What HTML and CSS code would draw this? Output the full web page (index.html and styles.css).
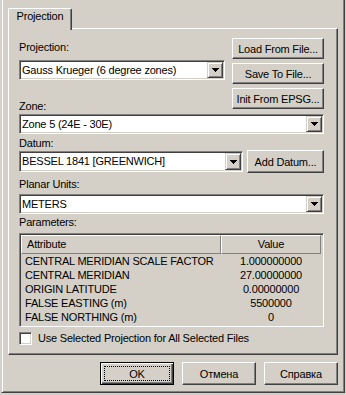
FILE: index.html
```html
<!DOCTYPE html>
<html lang="en">
  <head>
    <meta charset="UTF-8" />
    <meta name="viewport" content="width=device-width, initial-scale=1.0" />
    <title>Projection</title>
    <link rel="stylesheet" href="styles.css">
  </head>
  <body>
    <div class="window">
      <div class="tabs">
        <div class="tab">Projection</div>
      </div>
      <div class="panel">
        <div class="top">
          <div class="top-left">
            <div class="label first">Projection:</div>
            <div class="combo combo-proj">
              <span class="combo-text">Gauss Krueger (6 degree zones)</span>
              <span class="drop"><svg width="7" height="4"><rect x="0" y="0" width="7" height="1"/><rect x="1" y="1" width="5" height="1"/><rect x="2" y="2" width="3" height="1"/><rect x="3" y="3" width="1" height="1"/></svg></span>
            </div>
            <div class="label zone-label">Zone:</div>
          </div>
          <div class="top-right">
            <button class="btn side-btn">Load From File...</button>
            <button class="btn side-btn">Save To File...</button>
            <button class="btn side-btn">Init From EPSG...</button>
          </div>
        </div>
        <div class="combo combo-zone">
          <span class="combo-text">Zone 5 (24E - 30E)</span>
          <span class="drop"><svg width="7" height="4"><rect x="0" y="0" width="7" height="1"/><rect x="1" y="1" width="5" height="1"/><rect x="2" y="2" width="3" height="1"/><rect x="3" y="3" width="1" height="1"/></svg></span>
        </div>
        <div class="label datum-label">Datum:</div>
        <div class="datum-row">
          <div class="combo combo-datum">
            <span class="combo-text">BESSEL 1841 [GREENWICH]</span>
            <span class="drop"><svg width="7" height="4"><rect x="0" y="0" width="7" height="1"/><rect x="1" y="1" width="5" height="1"/><rect x="2" y="2" width="3" height="1"/><rect x="3" y="3" width="1" height="1"/></svg></span>
          </div>
          <button class="btn datum-btn">Add Datum...</button>
        </div>
        <div class="label units-label">Planar Units:</div>
        <div class="combo combo-units">
          <span class="combo-text">METERS</span>
          <span class="drop"><svg width="7" height="4"><rect x="0" y="0" width="7" height="1"/><rect x="1" y="1" width="5" height="1"/><rect x="2" y="2" width="3" height="1"/><rect x="3" y="3" width="1" height="1"/></svg></span>
        </div>
        <div class="label params-label">Parameters:</div>
        <div class="list">
          <div class="list-head">
            <div class="head-cell head-attr">Attribute</div>
            <div class="head-cell head-value">Value</div>
          </div>
          <div class="list-body">
            <div class="cell-attr">CENTRAL MERIDIAN SCALE FACTOR</div>
            <div class="cell-value">1.000000000</div>
            <div class="cell-attr">CENTRAL MERIDIAN</div>
            <div class="cell-value">27.00000000</div>
            <div class="cell-attr">ORIGIN LATITUDE</div>
            <div class="cell-value">0.00000000</div>
            <div class="cell-attr">FALSE EASTING (m)</div>
            <div class="cell-value">5500000</div>
            <div class="cell-attr">FALSE NORTHING (m)</div>
            <div class="cell-value">0</div>
          </div>
        </div>
        <div class="check-row">
          <span class="check"></span>
          <span>Use Selected Projection for All Selected Files</span>
        </div>
      </div>
      <div class="actions">
        <button class="btn action-btn default-btn"><span class="focus">OK</span></button>
        <button class="btn action-btn">Отмена</button>
        <button class="btn action-btn">Справка</button>
      </div>
    </div>
  </body>
</html>
```

FILE: styles.css
```css
* {
  box-sizing: border-box;
}
body {
  margin: 0;
  width: 346px;
  height: 395px;
  background-color: #d4d0c8;
  font-family: "Liberation Sans", Arial, sans-serif;
  font-size: 11px;
  letter-spacing: -0.2px;
  color: #000;
  overflow: hidden;
}
.window {
  margin-left: 1px;
  width: 344px;
  height: 393px;
  border-left: 1px solid #d4d0c8;
  border-right: 1px solid #404040;
  border-bottom: 1px solid #404040;
  box-shadow: inset 1px 0 #fff, inset -1px -1px #808080;
}
.tabs {
  display: flex;
  padding-top: 8px;
  padding-left: 6px;
}
.tab {
  position: relative;
  z-index: 1;
  width: 64px;
  height: 22px;
  margin-bottom: -2px;
  padding-top: 1px;
  line-height: 13px;
  text-align: center;
  background-color: #d4d0c8;
  border-top: 1px solid #fff;
  border-left: 1px solid #fff;
  border-right: 1px solid #404040;
  border-radius: 2px 2px 0 0;
  box-shadow: inset -1px 0 #808080;
}
.panel {
  margin-left: 6px;
  width: 330px;
  height: 327px;
  padding: 9px 13px 0 10px;
  border: 1px solid;
  border-color: #fff #404040 #404040 #fff;
  box-shadow: inset -1px -1px #808080;
}
.label {
  height: 13px;
  line-height: 13px;
  white-space: nowrap;
}
.top {
  display: flex;
  justify-content: space-between;
  height: 75px;
}
.top-left {
  width: 206px;
}
.top-right {
  display: flex;
  flex-direction: column;
  gap: 4px;
}
.first {
  margin-top: 3px;
}
.zone-label {
  margin-top: 20px;
}
.datum-label {
  margin-top: 3px;
}
.units-label {
  margin-top: 5px;
}
.params-label {
  margin-top: 2px;
}
.btn {
  display: flex;
  align-items: center;
  justify-content: center;
  padding: 0;
  font: inherit;
  letter-spacing: inherit;
  color: #000;
  background-color: #d4d0c8;
  border: 1px solid;
  border-color: #fff #404040 #404040 #fff;
  box-shadow: inset -1px -1px #808080;
  white-space: nowrap;
}
.side-btn {
  width: 92px;
  height: 21px;
}
.combo {
  display: flex;
  height: 20px;
  padding: 1px;
  background-color: #fff;
  border: 1px solid;
  border-color: #808080 #fff #fff #808080;
  box-shadow: inset 1px 1px #404040, inset -1px -1px #d4d0c8;
}
.combo-proj {
  margin-top: 6px;
}
.combo-zone {
  margin-top: 1px;
}
.combo-units {
  margin-top: 3px;
}
.combo-datum {
  width: 224px;
  height: 21px;
}
.combo-text {
  flex: 1;
  padding-left: 1px;
  line-height: 16px;
  white-space: nowrap;
  overflow: hidden;
}
.drop {
  display: flex;
  align-items: center;
  justify-content: center;
  width: 16px;
  background-color: #d4d0c8;
  border: 1px solid;
  border-color: #d4d0c8 #404040 #404040 #d4d0c8;
  box-shadow: inset 1px 1px #fff, inset -1px -1px #808080;
}
.drop svg {
  display: block;
  fill: #000;
  shape-rendering: crispEdges;
}
.datum-row {
  display: flex;
  align-items: center;
  justify-content: space-between;
  height: 23px;
}
.datum-btn {
  width: 77px;
  height: 23px;
}
.list {
  margin-top: 4px;
  height: 94px;
  border: 1px solid;
  border-color: #808080 #fff #fff #808080;
  box-shadow: inset 1px 1px #404040, inset -1px -1px #d4d0c8;
  padding: 1px;
}
.list-head {
  display: grid;
  grid-template-columns: 200px 100px;
  height: 18px;
}
.head-cell {
  line-height: 17px;
  border: 1px solid;
  border-color: #fff #808080 #808080 #fff;
}
.head-attr {
  padding-left: 5px;
}
.head-value {
  text-align: center;
}
.list-body {
  display: grid;
  grid-template-columns: 200px 100px;
  padding-top: 1px;
  line-height: 14px;
}
.cell-attr {
  padding-left: 4px;
  white-space: nowrap;
}
.cell-value {
  text-align: center;
}
.check-row {
  display: flex;
  align-items: center;
  gap: 6px;
  margin-top: 5px;
  height: 13px;
  line-height: 13px;
  white-space: nowrap;
}
.check {
  width: 13px;
  height: 13px;
  background-color: #fff;
  border: 1px solid;
  border-color: #808080 #fff #fff #808080;
  box-shadow: inset 1px 1px #404040, inset -1px -1px #d4d0c8;
}
.actions {
  display: flex;
  justify-content: flex-end;
  gap: 8px;
  margin-top: 7px;
  padding-right: 6px;
}
.action-btn {
  width: 74px;
  height: 23px;
}
.default-btn {
  padding: 3px;
  border-color: #000;
  box-shadow: inset 1px 1px #fff, inset -1px -1px #404040, inset -2px -2px #808080;
}
.focus {
  display: flex;
  align-items: center;
  justify-content: center;
  flex: 1;
  align-self: stretch;
  border: 1px dotted #000;
}
```
